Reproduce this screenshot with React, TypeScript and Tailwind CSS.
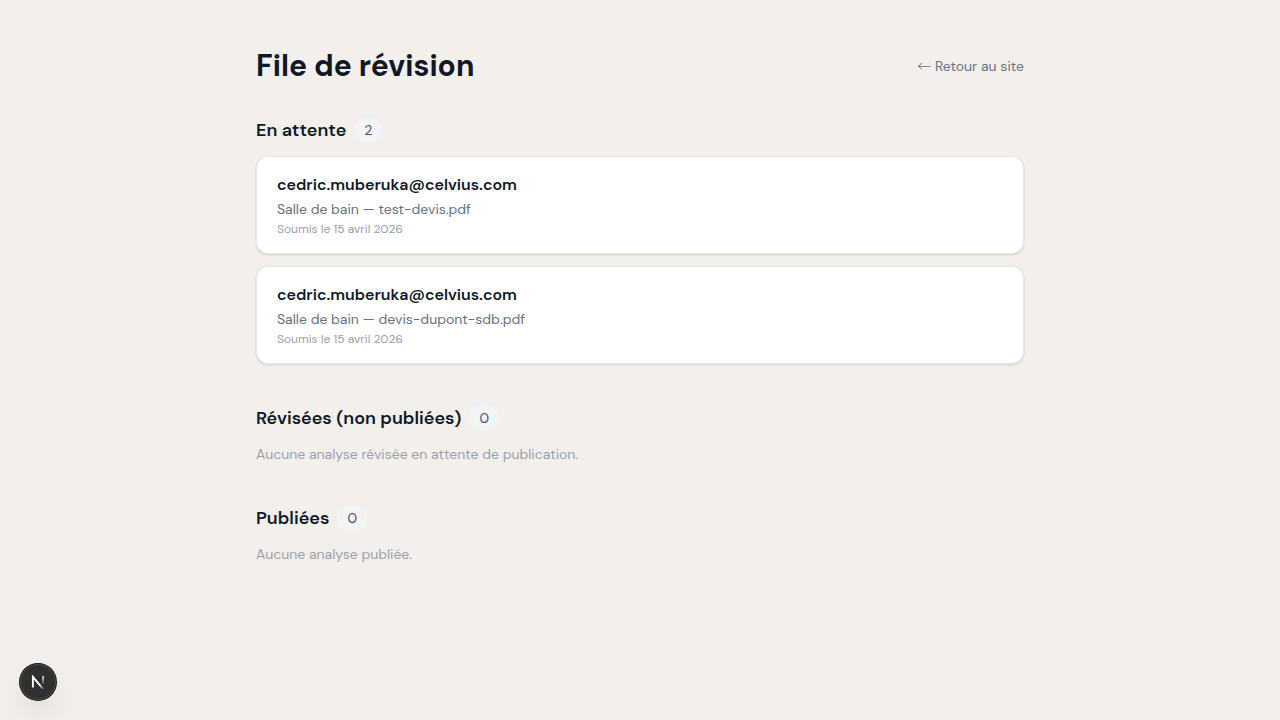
type Analysis = {
  id: number;
  email: string;
  room: string;
  file: string;
  submittedAt: string;
};

const pending: Analysis[] = [
  {
    id: 1,
    email: "cedric.muberuka@celvius.com",
    room: "Salle de bain",
    file: "test-devis.pdf",
    submittedAt: "15 avril 2026",
  },
  {
    id: 2,
    email: "cedric.muberuka@celvius.com",
    room: "Salle de bain",
    file: "devis-dupont-sdb.pdf",
    submittedAt: "15 avril 2026",
  },
];

const reviewed: Analysis[] = [];
const published: Analysis[] = [];

const AnalysisCard = ({ item }: { item: Analysis }) => (
  <a
    href={`#analyse-${item.id}`}
    className="block rounded-xl border border-gray-200 bg-white px-5 py-4 shadow-sm"
  >
    <p className="text-base font-semibold text-gray-900">{item.email}</p>
    <p className="mt-0.5 text-sm text-gray-500">
      {item.room} — {item.file}
    </p>
    <p className="mt-0.5 text-xs text-gray-400">Soumis le {item.submittedAt}</p>
  </a>
);

const QueueSection = ({
  title,
  items,
  empty,
}: {
  title: string;
  items: Analysis[];
  empty: string;
}) => (
  <section className="mb-10">
    <h2 className="mb-3 flex items-center gap-2 text-lg font-semibold text-gray-900">
      {title}
      <span className="rounded-full bg-gray-100 px-2.5 py-0.5 text-sm font-normal text-gray-600">
        {items.length}
      </span>
    </h2>
    {items.length > 0 ? (
      <div className="flex flex-col gap-3">
        {items.map((item) => (
          <AnalysisCard key={item.id} item={item} />
        ))}
      </div>
    ) : (
      <p className="text-sm text-gray-400">{empty}</p>
    )}
  </section>
);

const DevToolsButton = () => (
  <button
    type="button"
    aria-label="Open Next.js Dev Tools"
    className="fixed bottom-5 left-5 flex size-9 items-center justify-center rounded-full bg-[#30302e] shadow-[0_0_0_1px_#171717,inset_0_0_0_1px_rgba(255,255,255,0.14),0_16px_32px_-8px_rgba(0,0,0,0.24)]"
  >
    <svg width="14" height="14" viewBox="0 0 14 14" fill="none" aria-hidden="true">
      <defs>
        <linearGradient id="stem" x1="11" y1="1" x2="11" y2="10" gradientUnits="userSpaceOnUse">
          <stop stopColor="white" />
          <stop offset="1" stopColor="white" stopOpacity="0" />
        </linearGradient>
        <linearGradient id="slash" x1="9" y1="9" x2="13" y2="14" gradientUnits="userSpaceOnUse">
          <stop stopColor="white" />
          <stop offset="1" stopColor="white" stopOpacity="0.1" />
        </linearGradient>
      </defs>
      <path d="M1.9 12.6V1.9L12 13.9" stroke="url(#slash)" strokeWidth="1.9" />
      <path d="M12.1 1.2V9.6" stroke="url(#stem)" strokeWidth="1.7" />
    </svg>
  </button>
);

const App = () => {
  return (
    <div className="min-h-screen bg-[#f3f0eb] font-['DM_Sans','Inter',sans-serif]">
      <main className="mx-auto max-w-3xl py-12">
        <div className="mb-8 flex items-center justify-between">
          <h1 className="text-3xl font-bold text-gray-900">File de révision</h1>
          <a href="#site" className="text-sm text-gray-500">
            <span className="font-['Noto_Sans_CJK_JP',sans-serif] leading-none font-light">←</span>{" "}
            Retour au site
          </a>
        </div>

        <QueueSection title="En attente" items={pending} empty="Aucune analyse en attente." />
        <QueueSection
          title="Révisées (non publiées)"
          items={reviewed}
          empty="Aucune analyse révisée en attente de publication."
        />
        <QueueSection title="Publiées" items={published} empty="Aucune analyse publiée." />
      </main>
      <DevToolsButton />
    </div>
  );
};

export default App;
